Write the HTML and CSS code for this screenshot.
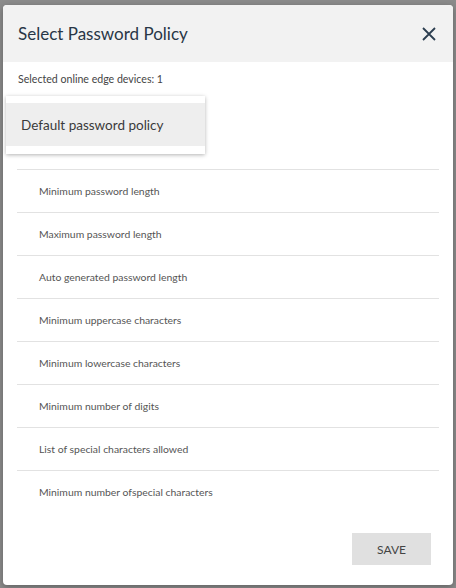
FILE: index.html
```html
<!DOCTYPE html>
<html>
<head>
<meta charset="utf-8">
<link rel="stylesheet" href="styles.css">
</head>
<body>
<div class="dialog">
  <div class="header">
    <div class="title">Select Password Policy</div>
    <svg class="close" width="14" height="14" viewBox="0 0 14 14"><path d="M1 1L13 13M13 1L1 13" stroke="#2c3e50" stroke-width="1.8" fill="none"/></svg>
  </div>
  <div class="info">Selected online edge devices: 1</div>
  <div class="field"></div>
  <div class="list">
    <div class="row">Minimum password length</div>
    <div class="row">Maximum password length</div>
    <div class="row">Auto generated password length</div>
    <div class="row">Minimum uppercase characters</div>
    <div class="row">Minimum lowercase characters</div>
    <div class="row">Minimum number of digits</div>
    <div class="row">List of special characters allowed</div>
    <div class="row">Minimum number ofspecial characters</div>
  </div>
  <div class="footer"><button class="save">SAVE</button></div>
  <div class="menu"><div class="menu-item">Default password policy</div></div>
</div>
</body>
</html>
```
FILE: styles.css
```css
html, body { margin: 0; padding: 0; }
body {
  background: #8b8b8b;
  width: 456px;
  height: 588px;
  overflow: hidden;
  font-family: Lato, "Liberation Sans", sans-serif;
}
.dialog {
  position: relative;
  margin: 5px 3px 0 3px;
  width: 450px;
  height: 580px;
  background: #fff;
  border-radius: 4px;
  overflow: hidden;
  display: flex;
  flex-direction: column;
  box-shadow: 0 2px 6px rgba(0,0,0,0.3);
}
.header {
  height: 57px;
  flex: none;
  background: #f2f2f2;
  display: flex;
  align-items: center;
  justify-content: space-between;
  padding: 0 17px 0 15px;
}
.title {
  font-size: 17px;
  color: #283646;
}
.close { display: block; }
.info {
  padding: 10px 0 0 15px;
  font-size: 10.6px;
  line-height: 14px;
  color: #444;
}
.field { height: 83px; flex: none; }
.list { margin: 0 14px; }
.row {
  height: 42px;
  border-top: 1px solid #e2e2e2;
  display: flex;
  align-items: center;
  padding-left: 22px;
  font-size: 10.4px;
  color: #555;
}
.footer {
  display: flex;
  justify-content: flex-end;
  padding: 20px 22px 0 0;
}
.save {
  width: 79px;
  height: 32px;
  border: none;
  background: #e0e0e0;
  font-family: Lato, "Liberation Sans", sans-serif;
  font-size: 12px;
  color: #444;
  padding: 0;
}
.menu {
  position: absolute;
  left: 3px;
  top: 91px;
  width: 199px;
  padding: 7px 0 8px;
  background: #fff;
  box-shadow: 0 1px 4px rgba(0,0,0,0.3);
}
.menu-item {
  height: 43px;
  background: #eeeeee;
  display: flex;
  align-items: center;
  padding-left: 15px;
  font-size: 13.5px;
  color: #3a3a3a;
}
```
